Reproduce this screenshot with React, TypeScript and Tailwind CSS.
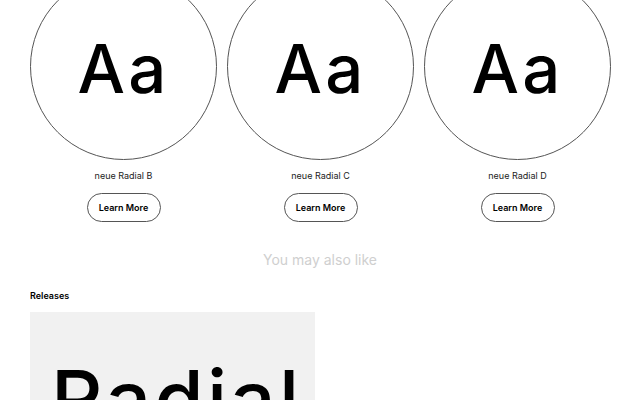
import React from 'react';

const fonts = [
  { name: 'neue Radial B' },
  { name: 'neue Radial C' },
  { name: 'neue Radial D' },
];

const App: React.FC = () => {
  return (
    <div className="min-h-screen w-full overflow-hidden bg-white font-['Inter',sans-serif] text-black">
      <div className="px-[30px]">
        <div className="-mt-[27px] grid grid-cols-[187px_187px_187px] gap-[10px]">
          {fonts.map((f) => (
            <div key={f.name} className="flex flex-col items-center">
              <div className="flex h-[187px] w-[187px] items-center justify-center rounded-full border border-[#555]">
                <span className="pt-[4px] text-[67px] font-medium leading-none tracking-[0.05em]">Aa</span>
              </div>
              <p className="mt-[10px] text-[9px] leading-[12px] text-[#222]">{f.name}</p>
              <button className="mt-[11px] flex h-[29px] w-[74px] items-center justify-center rounded-full border border-[#555] text-[9px] font-semibold text-black">
                Learn More
              </button>
            </div>
          ))}
        </div>

        <h2 className="mt-[28px] text-center text-[14px] leading-[20px] text-[#cfcfcf]">You may also like</h2>

        <h3 className="mt-[20px] text-[9px] font-semibold leading-[12px]">Releases</h3>

        <div className="mt-[10px] h-[120px] w-[285px] overflow-hidden bg-[#f1f1f1]">
          <div className="relative pl-[21px] pt-[47px]">
            <span className="text-[80px] font-medium leading-none tracking-[0.04em]">Radial</span>
          </div>
        </div>
      </div>
    </div>
  );
};

export default App;
